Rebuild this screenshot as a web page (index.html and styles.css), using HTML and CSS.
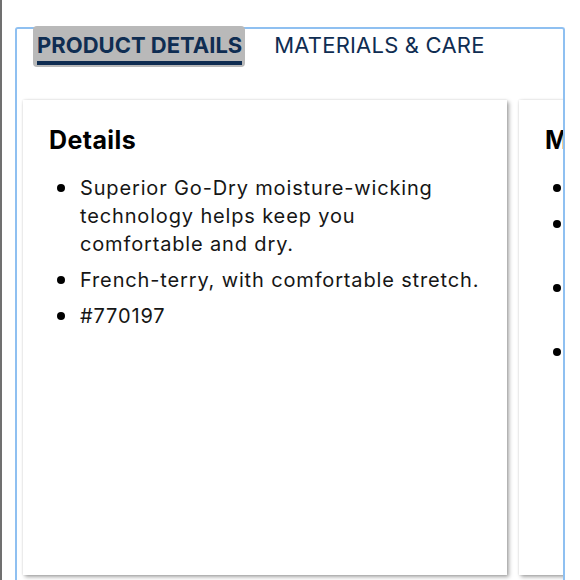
FILE: index.html
```html
<!DOCTYPE html>
<html>
<head>
<meta charset="utf-8">
<link rel="stylesheet" href="styles.css">
</head>
<body>
<div class="page">
  <div class="frame">
    <div class="tabs">
      <div class="tab active"><span class="label">PRODUCT DETAILS</span></div>
      <div class="tab"><span class="label">MATERIALS &amp; CARE</span></div>
    </div>
    <div class="cards">
      <section class="card">
        <h2>Details</h2>
        <ul>
          <li>Superior Go-Dry moisture-wicking technology helps keep you comfortable and dry.</li>
          <li>French-terry, with comfortable stretch.</li>
          <li>#770197</li>
        </ul>
      </section>
      <section class="card">
        <h2>Materials</h2>
        <ul>
          <li>Polyester/spandex.</li>
          <li>Machine wash cold with like colors, tumble dry low on gentle cycle.</li>
          <li>Do not bleach, do not iron print, do not dry clean this garment.</li>
          <li>Imported.</li>
        </ul>
      </section>
    </div>
  </div>
</div>
</body>
</html>
```

FILE: styles.css
```css
html, body {
  margin: 0;
  padding: 0;
  overflow: hidden;
  background: #fff;
}
.page {
  height: 580px;
  border-left: 2px solid #707070;
  box-sizing: border-box;
  padding-top: 27px;
  font-family: Inter, "Noto Sans", sans-serif;
  color: #161616;
}
.frame {
  margin-left: 13px;
  width: 550px;
  height: 553px;
  border: 2px solid #8fc0f1;
  border-bottom: none;
  border-radius: 3px 3px 0 0;
  box-sizing: border-box;
}
.tabs {
  display: flex;
  gap: 25px;
  padding-left: 16px;
  margin-top: -3px;
}
.tab {
  padding: 4px 3px 2px 4px;
  border-radius: 4px;
  color: #0f2d52;
  font-size: 22px;
  letter-spacing: 0.2px;
}
.tab .label {
  display: block;
  line-height: 31px;
  border-bottom: 4px solid transparent;
}
.tab.active {
  background: #b9b9b9;
  font-weight: 700;
  letter-spacing: 0;
}
.tab.active .label {
  border-bottom-color: #0f2d52;
}
.cards {
  display: flex;
  gap: 12px;
  height: 524px;
  padding: 33px 0 0 6px;
  box-sizing: border-box;
  overflow: hidden;
}
.card {
  flex: 0 0 484px;
  height: 475px;
  box-sizing: border-box;
  padding: 22px 27px 0 26px;
  background: #fff;
  box-shadow: 2px 2px 4px rgba(0,0,0,0.35), 0 0 2px rgba(0,0,0,0.12);
}
.card h2 {
  margin: 0 0 16px;
  font-size: 25px;
  line-height: 36px;
  font-weight: 700;
  letter-spacing: 0.4px;
  color: #000;
}
.card ul {
  margin: 0;
  padding: 0;
  list-style: none;
  font-size: 20px;
  line-height: 28px;
  letter-spacing: 0.85px;
}
.card li {
  display: grid;
  grid-template-columns: 31px 1fr;
  margin-bottom: 8px;
}
.card li::before {
  content: "";
  width: 8px;
  height: 8px;
  margin: 10px 0 0 8px;
  border-radius: 50%;
  background: #000;
}
```
